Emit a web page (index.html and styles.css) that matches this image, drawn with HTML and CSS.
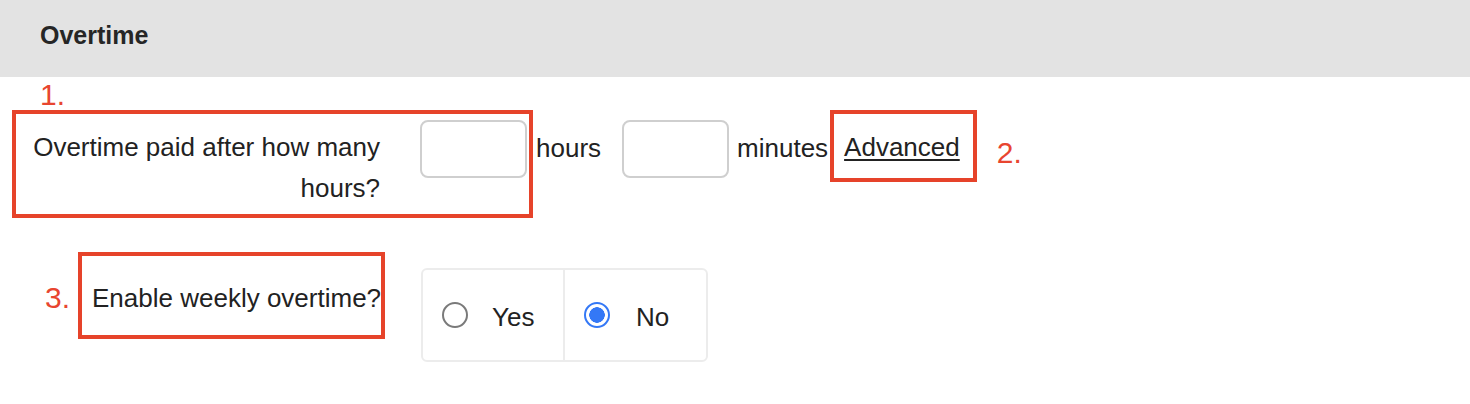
FILE: index.html
```html
<!DOCTYPE html>
<html lang="en">
<head>
<meta charset="utf-8">
<title>Overtime</title>
<link rel="stylesheet" href="styles.css">
</head>
<body>
<header class="section-header">Overtime</header>
<main class="form">
  <div class="note note-1">1.</div>
  <div class="row row-hours">
    <div class="mark mark-1">
      <label class="field-label label-wrap" for="ot-hours">Overtime paid after how many hours?</label>
      <input class="num-input" id="ot-hours" type="text">
    </div>
    <span class="unit unit-hours">hours</span>
    <input class="num-input input-minutes" type="text">
    <span class="unit unit-minutes">minutes</span>
    <div class="mark mark-2"><a class="advanced" href="#">Advanced</a></div>
    <span class="note note-2">2.</span>
  </div>
  <div class="row row-weekly">
    <span class="note note-3">3.</span>
    <div class="mark mark-3"><span class="field-label label-single">Enable weekly overtime?</span></div>
    <div class="radio-group">
      <label class="radio-cell"><input type="radio" name="weekly" class="radio"><span class="radio-text">Yes</span></label>
      <label class="radio-cell radio-cell-last"><input type="radio" name="weekly" class="radio" checked><span class="radio-text">No</span></label>
    </div>
  </div>
</main>
</body>
</html>
```
FILE: styles.css
```css
html, body {
  margin: 0;
  padding: 0;
  background: #ffffff;
}
body {
  font-family: "Liberation Sans", Arial, Helvetica, sans-serif;
  font-size: 26px;
  color: #222222;
}
.section-header {
  height: 77px;
  box-sizing: border-box;
  background: #e3e3e3;
  padding-left: 40px;
  font-size: 25px;
  font-weight: 700;
  line-height: 71px;
  color: #262626;
}
.note {
  font-size: 30px;
  line-height: 30px;
  color: #e8452f;
  white-space: nowrap;
}
.note-1 {
  margin: 3px 0 0 40px;
}
.row {
  display: flex;
  align-items: flex-start;
}
.row-hours {
  padding-left: 12px;
}
.mark {
  border: 4px solid #e6432a;
}
.mark-1 {
  display: flex;
  align-items: flex-start;
  padding: 6px 2px 5px 0;
}
.field-label {
  line-height: 41px;
}
.label-wrap {
  width: 364px;
  text-align: right;
  margin: 7px 40px 0 0;
}
.num-input {
  width: 107px;
  height: 58px;
  box-sizing: border-box;
  margin: 0;
  padding: 0 10px;
  border: 2px solid #cfcfcf;
  border-radius: 8px;
  font: inherit;
  background: #ffffff;
  flex: none;
}
.unit {
  line-height: 58px;
  margin-top: 9px;
  white-space: nowrap;
}
.unit-hours {
  margin-left: 3px;
}
.input-minutes {
  margin: 10px 0 0 21px;
}
.unit-minutes {
  margin-left: 8px;
}
.mark-2 {
  margin-left: 2px;
  padding: 4px 13px 2px 10px;
  line-height: 58px;
}
.advanced {
  color: #222222;
  text-decoration: underline;
  text-decoration-thickness: 2px;
  text-underline-offset: 3px;
  white-space: nowrap;
}
.note-2 {
  margin: 28px 0 0 20px;
}
.row-weekly {
  margin-top: 34px;
  padding-left: 45px;
}
.note-3 {
  margin-top: 31px;
}
.mark-3 {
  margin-left: 8px;
  padding: 22px 0 16px 10px;
  width: 289px;
  box-sizing: content-box;
}
.label-single {
  display: block;
  white-space: nowrap;
}
.radio-group {
  margin: 16px 0 0 36px;
  width: 287px;
  height: 94px;
  box-sizing: border-box;
  border: 2px solid #ececec;
  border-radius: 6px;
  display: flex;
  flex: none;
}
.radio-cell {
  width: 140px;
  box-sizing: border-box;
  display: flex;
  align-items: center;
  gap: 24px;
  padding-left: 19px;
}
.radio-cell-last {
  width: 143px;
  border-left: 2px solid #ececec;
  gap: 26px;
}
.radio {
  appearance: none;
  -webkit-appearance: none;
  width: 26px;
  height: 26px;
  margin: 0;
  border: 2px solid #7a7a7a;
  border-radius: 50%;
  background: #ffffff;
  flex: none;
}
.radio:checked {
  border-color: #3478f6;
  background: radial-gradient(circle, #3478f6 0 7.5px, #ffffff 8px);
}
.radio-text {
  margin-top: 4px;
}
```
